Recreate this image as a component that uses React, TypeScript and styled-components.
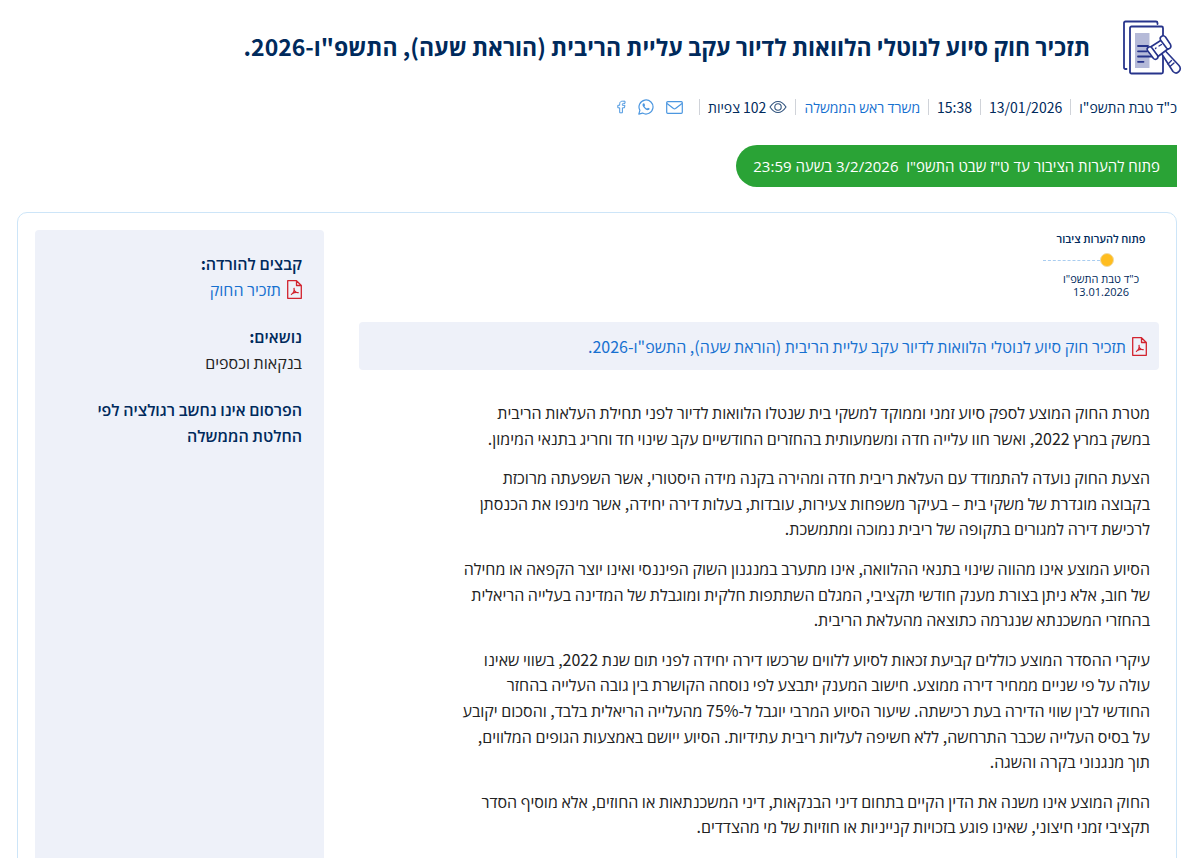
import React from "react";
import styled, { createGlobalStyle } from "styled-components";

const navy = "#002a5c";
const blue = "#1670d0";

const GlobalStyle = createGlobalStyle`
  * { box-sizing: border-box; }
  body {
    margin: 0;
    background: #fff;
    color: #222;
    font-family: "Noto Sans CJK SC", "Open Sans", "Noto Sans", sans-serif;
    font-size: 16px;
  }
  h1, h2, p { margin: 0; }
`;

const Page = styled.main`
  padding: 20px 23px 24px 17px;
`;

const TitleBar = styled.header`
  display: flex;
  align-items: flex-start;
  gap: 32px;
  margin-inline-start: -5px;
`;

const Title = styled.h1`
  color: ${navy};
  font-size: 23px;
  font-weight: 700;
  line-height: 52px;
  white-space: nowrap;
`;

const Meta = styled.div`
  display: flex;
  align-items: center;
  height: 24px;
  margin-top: 19px;
  color: ${navy};
  font-size: 14px;
  line-height: 24px;
  white-space: nowrap;
`;

const MetaItem = styled.span`
  display: flex;
  align-items: center;
  gap: 3px;
  & + & {
    margin-inline-start: 8px;
    padding-inline-start: 9px;
    background: linear-gradient(#d0d3d9, #d0d3d9) right center / 1px 16px no-repeat;
  }
`;

const Link = styled.a`
  color: ${blue};
  text-decoration: none;
`;

const Share = styled.span`
  display: flex;
  align-items: center;
  gap: 12px;
  padding-inline-start: 8px;
`;

const ShareButton = styled.button`
  display: flex;
  padding: 0;
  border: 0;
  background: none;
  color: #4c97e0;
  cursor: pointer;
`;

const Status = styled.p`
  width: fit-content;
  margin-top: 26px;
  padding: 0 17px;
  border-radius: 21px 0 0 21px;
  background: #2aa336;
  color: #fff;
  font-family: "Open Sans", "Noto Sans", sans-serif;
  font-size: 15px;
  font-weight: 500;
  line-height: 42px;
  white-space: pre;
`;

const Card = styled.div`
  display: flex;
  gap: 35px;
  margin-top: 25px;
  padding: 17px;
  border: 1px solid #cde5f8;
  border-radius: 10px;
`;

const Content = styled.section`
  flex: 1;
  min-width: 0;
`;

const Aside = styled.aside`
  width: 289px;
  padding: 21px 22px;
  border-radius: 4px;
  background: #eef1f9;
  line-height: 1.6;
`;

const Stage = styled.div`
  width: 116px;
  text-align: center;
  color: ${navy};
  font-size: 11px;
`;

const StageName = styled.h2`
  font-size: 11px;
  font-weight: 600;
  line-height: 16px;
  white-space: nowrap;
`;

const Track = styled.div`
  display: flex;
  align-items: center;
  height: 14px;
  margin-top: 7px;
  padding-inline-start: 45px;
`;

const Dot = styled.span`
  flex: none;
  width: 14px;
  height: 14px;
  border: 1px solid #f0dba6;
  border-radius: 50%;
  background: #ffbd1f;
`;

const Dashes = styled.span`
  flex: 1;
  border-top: 1px dashed #a9cdf0;
`;

const StageDate = styled.p`
  margin-top: 5px;
  font-family: "Open Sans", "Noto Sans", sans-serif;
  font-weight: 500;
  line-height: 13px;
  white-space: nowrap;
`;

const Document = styled(Link)`
  display: flex;
  align-items: center;
  gap: 6px;
  height: 48px;
  margin-top: 24px;
  padding: 0 12px;
  border-radius: 4px;
  background: #eef1f9;
  line-height: 22px;
  white-space: nowrap;
`;

const Article = styled.article`
  margin-top: 30px;
  padding: 0 9px 48px;
  line-height: 1.6;
  white-space: nowrap;
`;

const Paragraph = styled.p`
  & + & { margin-top: 14px; }
`;

const Group = styled.div`
  & + & { margin-top: 22px; }
`;

const GroupTitle = styled.h2`
  color: ${navy};
  font-size: 16px;
  font-weight: 600;
`;

const FileLink = styled(Link)`
  display: flex;
  align-items: center;
  gap: 6px;
`;

const LawIcon = () => (
  <svg width="60" height="56" viewBox="0 0 60 56" fill="none" stroke="#27348b" strokeWidth="1.8" strokeLinecap="round" strokeLinejoin="round">
    <path d="M4.500 49H3.500Q2 49 2 47.500V3Q2 1.500 3.500 1.500H34Q35.500 1.500 35.500 3V4" />
    <rect x="8" y="6.500" width="33" height="47" rx="1.500" fill="#fff" />
    <path d="M13 13H27.500V48H13Z" fill="#b5bad8" stroke="none" />
    <path d="M16 26H26M16 31.300H25M16 36.500H32M16 41.800H21.500" />
    <g fill="#fff" strokeWidth="1.6">
      <path d="M39.500 33.500L43 30.500L57 45.500C60.500 50 55 55.500 51 51.500Z" />
      <path d="M28.500 27L39.500 20L46.500 28.500L36 36.500Z" />
      <path d="M38.500 20C37 16.500 41.500 14.500 43.500 17L48.500 24.500C50 28 46.500 30 44.500 28Z" />
      <path d="M25.500 30.500C24 27.500 28 25.500 30 28L35.500 35.500C37 38.500 33.500 40.500 31.500 38.500Z" />
    </g>
    <path d="M46 44L49.500 40.500M48 46.500L52 43M37 26L39.500 24.500M33.500 28.500L34 28" strokeWidth="1.4" />
  </svg>
);

const EyeIcon = () => (
  <svg width="18" height="14" viewBox="0 0 18 14" fill="none" stroke="#2f527d" strokeWidth="1.100">
    <path d="M1 7C3.500 3.200 6 1.500 9 1.500S14.500 3.200 17 7C14.500 10.800 12 12.500 9 12.500S3.500 10.800 1 7Z" />
    <circle cx="9" cy="7" r="3.200" />
  </svg>
);

const MailIcon = () => (
  <svg width="17" height="13" viewBox="0 0 17 13" fill="none" stroke="currentColor" strokeWidth="1.200" strokeLinejoin="round">
    <rect x=".7" y=".7" width="15.600" height="11.600" rx="1" />
    <path d="M1 2.500L7.500 7.500Q8.500 8.200 9.500 7.500L16 2.500" />
  </svg>
);

const WhatsappIcon = () => (
  <svg width="16" height="16" viewBox="0 0 16 16" fill="none" stroke="currentColor" strokeWidth="1.200" strokeLinejoin="round">
    <path d="M.8 15.200L1.900 11.400A7 7 0 1 1 4.600 14.100Z" />
    <path d="M5.600 4.200C4.300 4.600 4.200 6.200 5.200 7.700C6.500 9.800 8.600 11.400 10.300 11.100C11.500 10.900 11.800 9.900 11.600 9.500L10 8.700L9.200 9.600C8 9.200 7 8.200 6.500 7.200L7.100 6.300L6.400 4.400Z" fill="currentColor" stroke="none" />
  </svg>
);

const FacebookIcon = () => (
  <svg width="9" height="14" viewBox="0 0 9 14" fill="none" stroke="currentColor" strokeWidth="1" strokeLinejoin="round">
    <path d="M2.700 12.800V7.800H.8V5.300H2.700V3.700C2.700 1.900 4 1.200 5.700 1.200H8V3.400H6.500C5.700 3.400 5.400 3.700 5.400 4.300V5.300H7.900L7.500 7.800H5.400V12.800Z" />
  </svg>
);

const PdfIcon = () => (
  <svg width="15" height="19" viewBox="0 0 15 19" fill="none" stroke="#d2232f" strokeWidth="1.300" strokeLinejoin="round" aria-hidden="true">
    <path d="M.7 .7H9.500L14.300 5.500V18.300H.7ZM9.500 .7V5.500H14.300" />
    <path d="M4 14.800C6 13.500 7.700 10.500 7 7.800M7 9.300C7.500 11.500 9 12.800 11.700 12.600M5.500 13.300C7.500 12.300 9 12.100 11 12.600" />
  </svg>
);

const paragraphs = [
  [
    "מטרת החוק המוצע לספק סיוע זמני וממוקד למשקי בית שנטלו הלוואות לדיור לפני תחילת העלאות הריבית",
    "במשק במרץ 2022, ואשר חוו עלייה חדה ומשמעותית בהחזרים החודשיים עקב שינוי חד וחריג בתנאי המימון.",
  ],
  [
    "הצעת החוק נועדה להתמודד עם העלאת ריבית חדה ומהירה בקנה מידה היסטורי, אשר השפעתה מרוכזת",
    "בקבוצה מוגדרת של משקי בית – בעיקר משפחות צעירות, עובדות, בעלות דירה יחידה, אשר מינפו את הכנסתן",
    "לרכישת דירה למגורים בתקופה של ריבית נמוכה ומתמשכת.",
  ],
  [
    "הסיוע המוצע אינו מהווה שינוי בתנאי ההלוואה, אינו מתערב במנגנון השוק הפיננסי ואינו יוצר הקפאה או מחילה",
    "של חוב, אלא ניתן בצורת מענק חודשי תקציבי, המגלם השתתפות חלקית ומוגבלת של המדינה בעלייה הריאלית",
    "בהחזרי המשכנתא שנגרמה כתוצאה מהעלאת הריבית.",
  ],
  [
    "עיקרי ההסדר המוצע כוללים קביעת זכאות לסיוע ללווים שרכשו דירה יחידה לפני תום שנת 2022, בשווי שאינו",
    "עולה על פי שניים ממחיר דירה ממוצע. חישוב המענק יתבצע לפי נוסחה הקושרת בין גובה העלייה בהחזר",
    "החודשי לבין שווי הדירה בעת רכישתה. שיעור הסיוע המרבי יוגבל ל-75% מהעלייה הריאלית בלבד, והסכום יקובע",
    "על בסיס העלייה שכבר התרחשה, ללא חשיפה לעליות ריבית עתידיות. הסיוע ייושם באמצעות הגופים המלווים,",
    "תוך מנגנוני בקרה והשגה.",
  ],
  [
    "החוק המוצע אינו משנה את הדין הקיים בתחום דיני הבנקאות, דיני המשכנתאות או החוזים, אלא מוסיף הסדר",
    "תקציבי זמני חיצוני, שאינו פוגע בזכויות קנייניות או חוזיות של מי מהצדדים.",
  ],
];

const lawTitle = 'תזכיר חוק סיוע לנוטלי הלוואות לדיור עקב עליית הריבית (הוראת שעה), התשפ"ו-2026.';

export default function App() {
  return (
    <Page dir="rtl" lang="he">
      <GlobalStyle />
      <TitleBar>
        <LawIcon />
        <Title>{lawTitle}</Title>
      </TitleBar>
      <Meta>
        <MetaItem>כ"ד טבת התשפ"ו</MetaItem>
        <MetaItem>13/01/2026</MetaItem>
        <MetaItem>15:38</MetaItem>
        <MetaItem><Link href="#office">משרד ראש הממשלה</Link></MetaItem>
        <MetaItem><EyeIcon /><span>102 צפיות</span></MetaItem>
        <MetaItem>
          <Share>
            <ShareButton aria-label="דואר אלקטרוני"><MailIcon /></ShareButton>
            <ShareButton aria-label="וואטסאפ"><WhatsappIcon /></ShareButton>
            <ShareButton aria-label="פייסבוק"><FacebookIcon /></ShareButton>
          </Share>
        </MetaItem>
      </Meta>
      <Status>{'פתוח להערות הציבור עד ט"ז שבט התשפ"ו  3/2/2026 בשעה 23:59'}</Status>
      <Card>
        <Content>
          <Stage>
            <StageName>פתוח להערות ציבור</StageName>
            <Track><Dot /><Dashes /></Track>
            <StageDate>כ"ד טבת התשפ"ו<br />13.01.2026</StageDate>
          </Stage>
          <Document href="#law"><PdfIcon /><span>{lawTitle}</span></Document>
          <Article>
            {paragraphs.map((lines, i) => (
              <Paragraph key={i}>
                {lines.map((line, j) => (
                  <React.Fragment key={j}>{j > 0 && <br />}{line}</React.Fragment>
                ))}
              </Paragraph>
            ))}
          </Article>
        </Content>
        <Aside>
          <Group>
            <GroupTitle>קבצים להורדה:</GroupTitle>
            <FileLink href="#file"><PdfIcon /><span>תזכיר החוק</span></FileLink>
          </Group>
          <Group>
            <GroupTitle>נושאים:</GroupTitle>
            <p>בנקאות וכספים</p>
          </Group>
          <Group>
            <GroupTitle>הפרסום אינו נחשב רגולציה לפי החלטת הממשלה</GroupTitle>
          </Group>
        </Aside>
      </Card>
    </Page>
  );
}
